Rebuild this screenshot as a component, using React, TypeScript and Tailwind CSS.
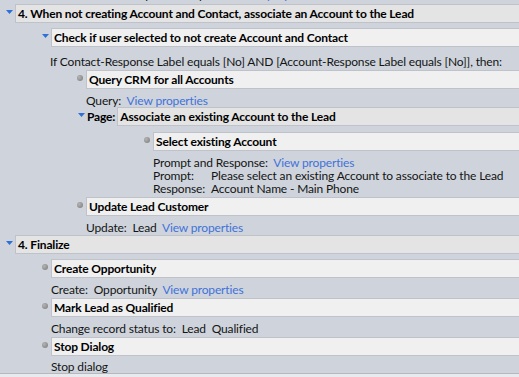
import type { ReactNode } from "react";

const font = { fontFamily: 'Lato, "Open Sans", sans-serif' };

function Triangle() {
  return (
    <svg width="7" height="4" viewBox="0 0 7 4" className="block">
      <path d="M0 0 H7 L3.5 4 Z" fill="#2f6fd6" />
    </svg>
  );
}

function Dot() {
  return <div className="w-[6px] h-[6px] rounded-full bg-[radial-gradient(circle_at_35%_35%,#b4b4b4,#7a7a7a)]" />;
}

type BarProps = {
  indent: number;
  icon: "tri" | "dot";
  tone: "group" | "step";
  label?: string;
  title: string;
};

// one header strip, icon sits in the 9px gutter just before it
function Bar({ indent, icon, tone, label, title }: BarProps) {
  return (
    <div className="flex h-[19px] shrink-0" style={{ paddingLeft: indent }}>
      <div className={`w-[9px] shrink-0 flex justify-start ${icon === "tri" ? "pt-[6px]" : "pt-[5px]"}`}>
        {icon === "tri" ? <Triangle /> : <Dot />}
      </div>
      {label && (
        <div className="flex items-center pr-[2px] text-[12px] tracking-[-0.15px] font-bold text-black whitespace-nowrap">
          {label}
        </div>
      )}
      <div
        className={`flex-1 flex items-center pl-[2px] border-y border-l border-[#bfc3c9] text-[12px] tracking-[-0.15px] font-bold text-black whitespace-nowrap overflow-hidden ${
          tone === "group" ? "bg-[#e4e4e4]" : "bg-[#f0f0f0]"
        }`}
      >
        {title}
      </div>
    </div>
  );
}

function Desc({ indent, h, top = 5, children }: { indent: number; h: number; top?: number; children: ReactNode }) {
  return (
    <div
      className="shrink-0 text-[12px] tracking-[-0.15px] leading-[13px] text-[#141414] whitespace-nowrap overflow-hidden"
      style={{ paddingLeft: indent, paddingTop: top, height: h }}
    >
      {children}
    </div>
  );
}

function Link({ children }: { children: ReactNode }) {
  return <span className="text-[#3f72d8]">{children}</span>;
}

export default function App() {
  return (
    <div className="w-[519px] h-[377px] overflow-hidden bg-[#cfd4dc] flex flex-col" style={font}>
      {/* tail of the previous step, only descenders show */}
      <div className="h-[4px] shrink-0 overflow-hidden">
        <div className="-mt-[12px] pl-[118px] text-[12px] tracking-[-0.15px] leading-[13px] text-[#141414] whitespace-nowrap">
          Prompt and Response:&nbsp; <Link>View properties</Link>
        </div>
      </div>

      <Bar indent={6} icon="tri" tone="group" title="4. When not creating Account and Contact, associate an Account to the Lead" />
      <div className="h-[5px] shrink-0" />

      <Bar indent={42} icon="tri" tone="step" title="Check if user selected to not create Account and Contact" />
      <Desc indent={50} h={23} top={8}>
        If Contact-Response Label equals [No] AND [Account-Response Label equals [No]], then:
      </Desc>

      <Bar indent={77} icon="dot" tone="step" title="Query CRM for all Accounts" />
      <Desc indent={86} h={18}>
        Query:&nbsp; <Link>View properties</Link>
      </Desc>

      <Bar indent={78} icon="tri" tone="group" label="Page:" title="Associate an existing Account to the Lead" />
      <div className="h-[6px] shrink-0" />

      <Bar indent={144} icon="dot" tone="step" title="Select existing Account" />
      <Desc indent={153} h={46}>
        <div>
          Prompt and Response:&nbsp; <Link>View properties</Link>
        </div>
        <div className="flex">
          <span className="w-[58px] shrink-0">Prompt:</span>
          <span>Please select an existing Account to associate to the Lead</span>
        </div>
        <div className="flex">
          <span className="w-[58px] shrink-0">Response:</span>
          <span>Account Name - Main Phone</span>
        </div>
      </Desc>

      <Bar indent={77} icon="dot" tone="step" title="Update Lead Customer" />
      <Desc indent={86} h={19}>
        Update:&nbsp; Lead&nbsp; <Link>View properties</Link>
      </Desc>

      <Bar indent={6} icon="tri" tone="group" title="4. Finalize" />
      <div className="h-[5px] shrink-0" />

      <Bar indent={42} icon="dot" tone="step" title="Create Opportunity" />
      <Desc indent={51} h={20}>
        Create:&nbsp; Opportunity&nbsp; <Link>View properties</Link>
      </Desc>

      <Bar indent={42} icon="dot" tone="step" title="Mark Lead as Qualified" />
      <Desc indent={51} h={20}>
        Change record status to:&nbsp; Lead&nbsp; Qualified
      </Desc>

      <Bar indent={42} icon="dot" tone="step" title="Stop Dialog" />
      <Desc indent={51} h={17} top={4}>
        Stop dialog
      </Desc>

      <div className="flex-1 border-t border-[#b4b9c0] bg-[#e8eaed]" />
    </div>
  );
}
